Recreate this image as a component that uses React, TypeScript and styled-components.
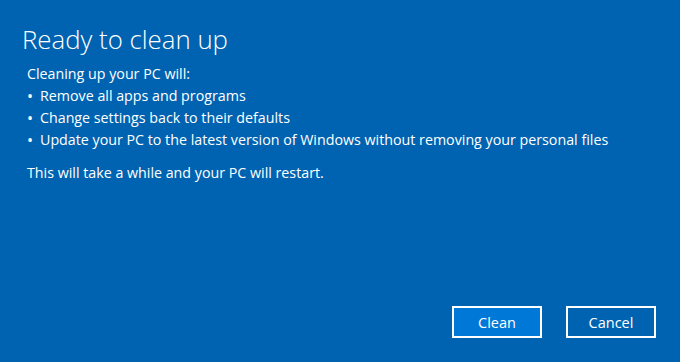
import React from 'react'
import styled, { createGlobalStyle } from 'styled-components'

const GlobalStyle = createGlobalStyle`
    html, body {
        margin: 0;
        padding: 0;
        background: #0063b1;
    }
    * {
        box-sizing: border-box;
    }
`

const items = [
    "Remove all apps and programs",
    "Change settings back to their defaults",
    "Update your PC to the latest version of Windows without removing your personal files",
]

const App = () => {
    return (
        <>
            <GlobalStyle />
            <Dialog>
                <Title>Ready to clean up</Title>
                <Body>
                    <Line>Cleaning up your PC will:</Line>
                    <List>
                        {items.map((item) => (
                            <Item key={item}>
                                <Bullet>•</Bullet>
                                {item}
                            </Item>
                        ))}
                    </List>
                    <Note>This will take a while and your PC will restart.</Note>
                </Body>
                <ButtonRow>
                    <Button primary>Clean</Button>
                    <Button>Cancel</Button>
                </ButtonRow>
            </Dialog>
        </>
    )
}

export default App

const Dialog = styled.div`
    display: flex;
    flex-direction: column;
    width: 680px;
    height: 362px;
    padding: 21px 24px 24px 22px;
    background: #0063b1;
    color: #ffffff;
    font-family: "Segoe UI", "Open Sans", "Noto Sans", sans-serif;
`

const Title = styled.h1`
    margin: 0;
    font-size: 25.8px;
    font-weight: 300;
    line-height: 36px;
`

const Body = styled.div`
    display: flex;
    flex-direction: column;
    padding-left: 5px;
    margin-top: 6px;
    font-size: 14.25px;
    line-height: 22px;
`

const Line = styled.div``

const List = styled.ul`
    margin: 0;
    padding: 0;
    list-style: none;
`

const Item = styled.li`
    display: flex;
`

const Bullet = styled.span`
    width: 13px;
    font-size: 16px;
    line-height: 22px;
`

const Note = styled.div`
    margin-top: 11px;
`

const ButtonRow = styled.div`
    display: flex;
    justify-content: flex-end;
    gap: 24px;
    margin-top: auto;
`

const Button = styled.button<{ primary?: boolean }>`
    width: 90px;
    height: 32px;
    border: 2px solid #ffffff;
    background: ${(p) => (p.primary ? '#0078d7' : '#0063b1')};
    color: #ffffff;
    font-family: inherit;
    font-size: 14.5px;
    padding: 0;
`
